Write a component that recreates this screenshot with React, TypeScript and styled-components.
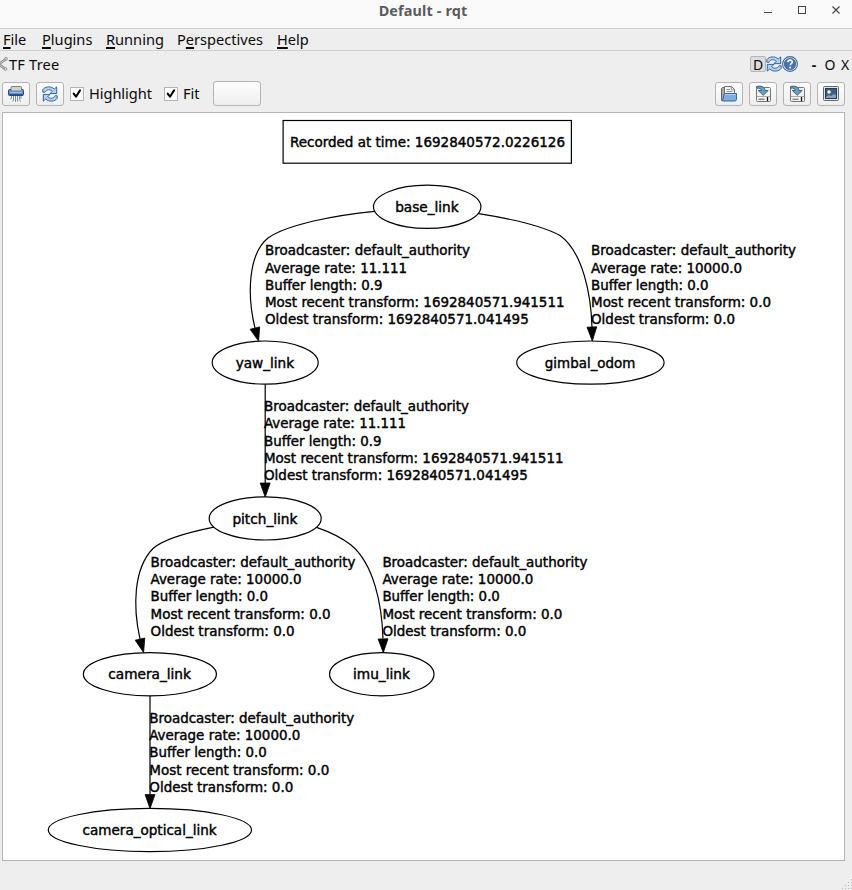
import React from "react";
import styled, { createGlobalStyle } from "styled-components";

const GlobalStyle = createGlobalStyle`
  html, body { margin: 0; padding: 0; background: #eeeeee; }
  * { box-sizing: border-box; }
  body { overflow: hidden; }
`;

const Window = styled.div`
  width: 852px;
  height: 890px;
  display: flex;
  flex-direction: column;
  background: #eeeeee;
  color: #0a0a0a;
  font: 14.6px "Noto Sans", "Open Sans", sans-serif;
  overflow: hidden;
`;

const TitleBar = styled.header`
  height: 29px;
  flex: none;
  display: grid;
  grid-template-columns: 1fr 92px 1fr;
  background: #fafafa;
  border-bottom: 1px solid #d0d0d0;
`;

const Title = styled.h1`
  grid-column: 2;
  margin: 0 0 0 -6px;
  font-size: 14.4px;
  font-weight: 700;
  line-height: 22px;
  color: #5b5b5b;
  white-space: nowrap;
  text-align: center;
  letter-spacing: 0.15px;
`;

const WindowButtons = styled.div`
  display: flex;
  justify-content: flex-end;
  padding: 3px 9px 0 0;
`;

const MenuBar = styled.nav`
  height: 22px;
  flex: none;
  display: flex;
  gap: 15px;
  padding-left: 3px;
  border-bottom: 1px solid #d0d0d0;
`;

const MenuItem = styled.span<{ $width: number }>`
  width: ${(p) => p.$width}px;
  flex: none;
  line-height: 21px;
  white-space: nowrap;
  u {
    text-decoration-thickness: 1.6px;
    text-underline-offset: 2px;
  }
`;

const DockTitle = styled.div`
  height: 26px;
  flex: none;
  display: flex;
  align-items: center;
  justify-content: space-between;
`;

const DockName = styled.div`
  display: flex;
  align-items: center;
  gap: 1px;
  line-height: 24px;
  padding-bottom: 1px;
  letter-spacing: 0.2px;
`;

const DockControls = styled.div`
  display: flex;
  align-items: center;
`;

const DButton = styled.span`
  width: 16px;
  height: 16px;
  border: 1px solid #b5b5b5;
  border-radius: 2px;
  background: #dddddd;
  line-height: 15px;
  font-size: 14px;
  text-align: center;
`;

const DockGlyph = styled.span<{ $width: number; $bold?: boolean }>`
  width: ${(p) => p.$width}px;
  padding: 1px 0 0 ${(p) => (p.$bold ? 8 : 0)}px;
  text-align: center;
  line-height: 18px;
  font-size: 14px;
  font-weight: ${(p) => (p.$bold ? 700 : 400)};
`;

const Toolbar = styled.div`
  height: 35px;
  flex: none;
  display: flex;
  align-items: center;
  justify-content: space-between;
  padding: 0 7px 2px 2px;
`;

const Group = styled.div`
  display: flex;
  align-items: center;
  gap: 6px;
`;

const ToolButton = styled.button<{ $width?: number }>`
  width: ${(p) => p.$width ?? 28}px;
  height: ${(p) => (p.$width ? 25 : 24)}px;
  display: flex;
  align-items: center;
  justify-content: center;
  padding: 0;
  border: 1px solid #b4b4b4;
  border-radius: 3px;
  background: linear-gradient(#fdfdfd, #efefef);
`;

const Check = styled.label<{ $width: number }>`
  width: ${(p) => p.$width}px;
  display: flex;
  align-items: center;
  gap: 5px;
  line-height: 22px;
  letter-spacing: -0.05px;
  white-space: nowrap;
`;

const CheckText = styled.span`
  padding-bottom: 2px;
`;

const CheckBox = styled.span`
  width: 14px;
  height: 14px;
  flex: none;
  display: flex;
  background: #fff;
  border: 1px solid #b4b4b4;
`;

const GraphFrame = styled.main`
  width: 843px;
  height: 749px;
  flex: none;
  margin-left: 2px;
  border: 1px solid #b4b4b4;
  background: #fff;
  svg { display: block; }
`;

const GraphText = styled.text`
  font-family: "DejaVu Sans Condensed", "DejaVu Sans", sans-serif;
  font-stretch: condensed;
  font-size: 14.8px;
  fill: #000;
  stroke: #000;
  stroke-width: 0.42px;
`;

const StatusBar = styled.footer`
  flex: 1;
  display: flex;
  justify-content: flex-end;
  align-items: flex-end;
`;

const RefreshIcon = () => (
  <svg width="16" height="16" viewBox="0 0 16 16">
    <g fill="#b4cfec" stroke="#3465a4" strokeWidth="1" strokeLinejoin="round">
      <path d="M.8 3.600C3.200.4 8.800-.2 12.300 3L14.700.9V7.600H8L10.300 5.200C7.800 3 4.600 3.400 3 6.200L.8 6.200z" />
      <path d="M15.200 12.400C12.800 15.600 7.200 16.200 3.700 13L1.300 15.100V8.400H8L5.700 10.800C8.200 13 11.400 12.600 13 9.800L15.200 9.800z" />
    </g>
  </svg>
);

const ShredIcon = () => (
  <svg width="18" height="18" viewBox="0 0 18 18">
    <path d="M4.500 9v4l-1 1.500M6.500 9v6l-1 1.500M8.500 9v8M10.500 9v7.500M12.500 9v5.500l1 2M14 9v5" stroke="#8c8c8c" fill="none" />
    <rect x="1.500" y="4.500" width="15" height="6" rx="1" fill="#5e90c9" stroke="#204a87" />
    <rect x="4" y="1.500" width="10.500" height="4.500" rx="1" fill="#d0d3cb" stroke="#7c7f78" />
    <path d="M3 7.400h12" stroke="#a4c6e9" />
    <path d="M2 9.500h14" stroke="#2a5596" />
  </svg>
);

const HelpIcon = () => (
  <svg width="16" height="16" viewBox="0 0 16 16">
    <circle cx="8" cy="8" r="7.400" fill="#fff" stroke="#3465a4" strokeWidth="1.100" />
    <circle cx="8" cy="8" r="5.800" fill="#4674b3" stroke="#204a87" strokeWidth="0.600" />
    <path d="M5.800 6.200C6 3.500 10.400 3.500 10.300 6c0 1.600-2.100 1.600-2.100 3.300" fill="none" stroke="#fff" strokeWidth="1.600" />
    <circle cx="8.200" cy="11.600" r="1" fill="#fff" />
  </svg>
);

const OpenIcon = () => (
  <svg width="18" height="18" viewBox="0 0 18 18">
    <path d="M1.500 15.500v-12l1-1h4v13z" fill="#aaa" stroke="#666" />
    <path d="M4.500 12V1.500h7l3 3V12z" fill="#fafafa" stroke="#707070" />
    <path d="M11.300 1.800v3h3M6.500 4.500h3.500M6.500 6.500h6" fill="none" stroke="#929292" />
    <path d="M4.200 8.500h12.300v6l-1 1.500H2.500z" fill="#80ace0" stroke="#3465a4" />
    <path d="M5 9.600h10.600" stroke="#b2d0f0" />
  </svg>
);

const SaveIcon = () => (
  <svg width="18" height="18" viewBox="0 0 18 18">
    <rect x="2.500" y="2.500" width="14" height="14" rx="1" fill="#f4f4f4" stroke="#777" />
    <path d="M3 11.500h13" stroke="#aaa" />
    <path d="M4.500 14.300h6" stroke="#888" strokeWidth="1.500" />
    <path d="M13.500 12v4" stroke="#111" strokeWidth="1.300" />
    <path d="M2.500 1.600C6.500.2 11 1.800 11 5.500h3.200L9.200 10.300 4.200 5.500h3.100C7.200 3.600 5.500 2.800 2.500 3.300z" fill="#6d9cbd" stroke="#2c627f" strokeWidth="0.900" strokeLinejoin="round" />
  </svg>
);

const ImageIcon = () => (
  <svg width="18" height="18" viewBox="0 0 18 18">
    <rect x="1.500" y="1.500" width="15" height="14" rx="1" fill="#e3e3df" stroke="#666" />
    <rect x="3.500" y="3.500" width="11" height="10" fill="#3b5d8c" stroke="#243b60" />
    <path d="M4 12l3-2 2 1 3-2 2 1v3H4z" fill="#8c9fb5" />
    <circle cx="7" cy="7" r="1.800" fill="#fff7ba" />
  </svg>
);

const Tick = () => (
  <svg width="12" height="12" viewBox="0 0 12 12">
    <path d="M2.700 5.600L5 8.700 9 2.400" fill="none" stroke="#000" strokeWidth="2" strokeLinecap="round" strokeLinejoin="round" />
  </svg>
);

type Line = [string, number];

const dynamicTransform: Line[] = [
  ["Broadcaster: default_authority", 205],
  ["Average rate: 11.111", 142],
  ["Buffer length: 0.9", 117.5],
  ["Most recent transform: 1692840571.941511", 299.5],
  ["Oldest transform: 1692840571.041495", 263.7],
];

const staticTransform: Line[] = [
  ["Broadcaster: default_authority", 205],
  ["Average rate: 10000.0", 151],
  ["Buffer length: 0.0", 117.5],
  ["Most recent transform: 0.0", 180],
  ["Oldest transform: 0.0", 144],
];

const nodes = [
  { name: "base_link", cx: 427.2, cy: 206.8, rx: 53.7, w: 63.5 },
  { name: "yaw_link", cx: 265.2, cy: 362.6, rx: 53, w: 58.5 },
  { name: "gimbal_odom", cx: 590.4, cy: 362.6, rx: 73.7, w: 90.5 },
  { name: "pitch_link", cx: 265.2, cy: 518.4, rx: 56, w: 65 },
  { name: "camera_link", cx: 149.9, cy: 674.2, rx: 66.5, w: 82.5 },
  { name: "imu_link", cx: 381.8, cy: 674.2, rx: 52.2, w: 57 },
  { name: "camera_optical_link", cx: 149.9, cy: 830, rx: 101.6, w: 134 },
];

const edges = [
  { d: "M374.5 211.3C337 215 288 224 268 238C248 254 247 296 255 328", head: "250.1,329.3 259.7,326.9 258.6,341.2", x: 265, y: 255.4, lines: dynamicTransform },
  { d: "M478.5 213.7C506 218 540 224.5 560 235.5C583 252 591 295 592 327", head: "587,327.2 596.8,326.8 592.3,341", x: 591, y: 255.4, lines: staticTransform },
  { d: "M265.2 384.4V483", head: "260.2,483 270.2,483 265.2,497", x: 264, y: 411.2, lines: dynamicTransform },
  { d: "M214 527.2C190 532 165 538 153 548.5C133 569 133 608 140 639", head: "135.2,640.2 144.8,638 143.6,652.5", x: 150.6, y: 567, lines: staticTransform },
  { d: "M316.5 527.4C330 532 342 538 351 545C374 564 382 605 383 638.5", head: "378.1,639 388,638.8 383.3,652.7", x: 382.4, y: 567, lines: staticTransform },
  { d: "M150 696V794.6", head: "145.1,794.6 155,794.6 150,808.5", x: 149.3, y: 722.9, lines: staticTransform },
];

const TransformTree = () => (
  <svg width="841" height="747" viewBox="3 113 841 747">
    <rect x="283.1" y="120.5" width="288.3" height="42.7" fill="none" stroke="#000" strokeWidth="1.2" />
    <GraphText x="290" y="147" textLength={275} lengthAdjust="spacingAndGlyphs">
      Recorded at time: 1692840572.0226126
    </GraphText>
    {edges.map((e) => (
      <g key={e.d}>
        <path d={e.d} fill="none" stroke="#000" strokeWidth="1.2" />
        <polygon points={e.head} stroke="#000" strokeWidth="0.8" />
        {e.lines.map(([text, width], i) => (
          <GraphText key={text} x={e.x} y={e.y + i * 17.2} textLength={width} lengthAdjust="spacingAndGlyphs">
            {text}
          </GraphText>
        ))}
      </g>
    ))}
    {nodes.map((n) => (
      <g key={n.name}>
        <ellipse cx={n.cx} cy={n.cy} rx={n.rx} ry="21.6" fill="none" stroke="#000" strokeWidth="1.2" />
        <GraphText x={n.cx - n.w / 2 - 0.3} y={n.cy + 5.2} textLength={n.w} lengthAdjust="spacingAndGlyphs">
          {n.name}
        </GraphText>
      </g>
    ))}
  </svg>
);

export default function App() {
  return (
    <Window>
      <GlobalStyle />
      <TitleBar>
        <Title>Default - rqt</Title>
        <WindowButtons>
          <svg width="82" height="16" viewBox="0 0 82 16" fill="none" stroke="#444">
            <path d="M3 9.500h8" />
            <rect x="37.500" y="3.500" width="7" height="7" />
            <path d="M71.500 3.500l7 7M78.500 3.500l-7 7" strokeWidth="1.200" />
          </svg>
        </WindowButtons>
      </TitleBar>
      <MenuBar>
        <MenuItem $width={24}><u>F</u>ile</MenuItem>
        <MenuItem $width={49}><u>P</u>lugins</MenuItem>
        <MenuItem $width={56}><u>R</u>unning</MenuItem>
        <MenuItem $width={85}>P<u>e</u>rspectives</MenuItem>
        <MenuItem $width={32}><u>H</u>elp</MenuItem>
      </MenuBar>
      <DockTitle>
        <DockName>
          <svg width="8" height="16" viewBox="0 0 8 16" fill="none">
            <path d="M-1 8L6 3M-1 8l6 5" stroke="#888" strokeWidth="2.400" />
            <path d="M-1 8L6 3M-1 8l6 5" stroke="#ddd" strokeWidth="0.800" />
            <circle cx="6" cy="2.800" r="1.400" fill="#ddd" stroke="#888" strokeWidth="0.800" />
            <circle cx="5.500" cy="13" r="1.400" fill="#ddd" stroke="#888" strokeWidth="0.800" />
          </svg>
          <span>TF Tree</span>
        </DockName>
        <DockControls>
          <DButton>D</DButton>
          <RefreshIcon />
          <HelpIcon />
          <DockGlyph $width={24} $bold>-</DockGlyph>
          <DockGlyph $width={16}>O</DockGlyph>
          <DockGlyph $width={14}>X</DockGlyph>
        </DockControls>
      </DockTitle>
      <Toolbar>
        <Group>
          <ToolButton><ShredIcon /></ToolButton>
          <ToolButton><RefreshIcon /></ToolButton>
          <Check $width={88}><CheckBox><Tick /></CheckBox><CheckText>Highlight</CheckText></Check>
          <Check $width={43}><CheckBox><Tick /></CheckBox><CheckText>Fit</CheckText></Check>
          <ToolButton $width={48} />
        </Group>
        <Group>
          <ToolButton><OpenIcon /></ToolButton>
          <ToolButton><SaveIcon /></ToolButton>
          <ToolButton><SaveIcon /></ToolButton>
          <ToolButton><ImageIcon /></ToolButton>
        </Group>
      </Toolbar>
      <GraphFrame><TransformTree /></GraphFrame>
      <StatusBar>
        <svg width="11" height="11" viewBox="0 0 11 11" fill="#b4b4b4">
          {[[10, 0], [7, 3], [10, 3], [4, 6], [7, 6], [10, 6], [1, 9], [4, 9], [7, 9], [10, 9]].map(([x, y]) => (
            <rect key={`${x}-${y}`} x={x} y={y} width="1" height="1" />
          ))}
        </svg>
      </StatusBar>
    </Window>
  );
}
